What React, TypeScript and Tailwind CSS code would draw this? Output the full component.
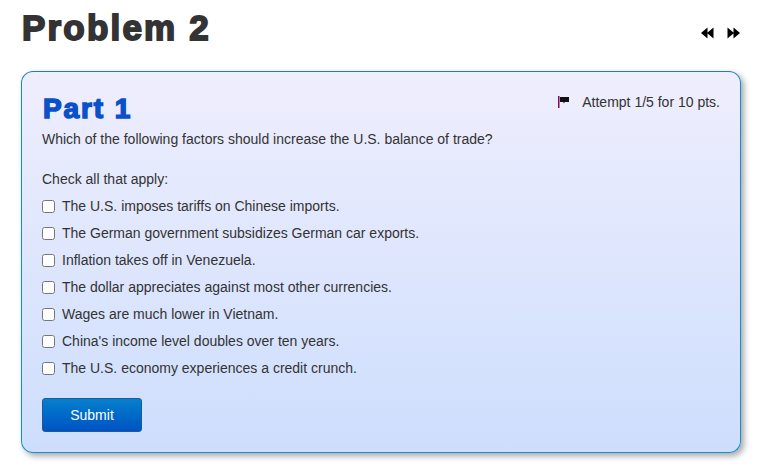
const choices = [
  "The U.S. imposes tariffs on Chinese imports.",
  "The German government subsidizes German car exports.",
  "Inflation takes off in Venezuela.",
  "The dollar appreciates against most other currencies.",
  "Wages are much lower in Vietnam.",
  "China's income level doubles over ten years.",
  "The U.S. economy experiences a credit crunch.",
];

function Arrows({ flip }: { flip?: boolean }) {
  return (
    <svg width="13" height="12" viewBox="0 0 13 12" className={flip ? "-scale-x-100" : ""}>
      <path d="M0 6 6.5 0.5V11.5ZM6 6 12.5 0.5V11.5Z" fill="#000" />
    </svg>
  );
}

function Flag() {
  return (
    <svg width="12" height="12" viewBox="0 0 12 12">
      <rect x="0" y="0" width="1.5" height="12" fill="#7a0a5a" />
      <path d="M2 1H11V6H7L5.5 7.5V6H2Z" fill="#111" />
    </svg>
  );
}

export default function App() {
  return (
    <div className="w-[761px] h-[468px] bg-white overflow-hidden font-['Liberation_Sans',Arial,sans-serif] text-[14px] leading-[20px] text-[#333]">
      <div className="flex items-start justify-between pl-[22px] pr-[21px] pt-[8px] h-[71px]">
        <h1 className="text-[35px] leading-[40px] font-bold tracking-[2.2px] text-[#333] [-webkit-text-stroke:1.8px_#333]">
          Problem 2
        </h1>
        <div className="flex items-center gap-[13px] mt-[19px]">
          <Arrows />
          <Arrows flip />
        </div>
      </div>

      <div className="ml-[21px] w-[720px] h-[382px] rounded-[12px] border border-[#0f8fd0] border-t-[#1c7fbb] bg-gradient-to-b from-[#efeefd] to-[#cddefd] shadow-[3px_3px_6px_rgba(0,0,0,0.35)] pl-[20px] pr-[21px] pt-[22px]">
        <div className="flex items-start justify-between">
          <h2 className="text-[28px] leading-[30px] font-bold tracking-[1.9px] pl-[1px] text-[#0a50c8] [-webkit-text-stroke:1.5px_#0a50c8]">
            Part 1
          </h2>
          <div className="flex items-center mt-[-2px] mr-[-1px]">
            <Flag />
            <span className="ml-[12px]">Attempt 1/5 for 10 pts.</span>
          </div>
        </div>
        <p className="mt-[5px]">Which of the following factors should increase the U.S. balance of trade?</p>
        <p className="mt-[20px]">Check all that apply:</p>
        <div className="mt-[7px] flex flex-col gap-[7px]">
          {choices.map((c) => (
            <label key={c} className="flex items-center h-[20px]">
              <input type="checkbox" className="m-0 w-[13px] h-[13px] appearance-auto" />
              <span className="ml-[7px]">{c}</span>
            </label>
          ))}
        </div>
        <button className="mt-[20px] w-[100px] h-[34px] rounded-[3px] border border-[#1c5a9c] bg-gradient-to-b from-[#0a80cc] to-[#0052c4] text-white text-[14px] font-['Liberation_Sans',Arial,sans-serif]">
          Submit
        </button>
      </div>
    </div>
  );
}
